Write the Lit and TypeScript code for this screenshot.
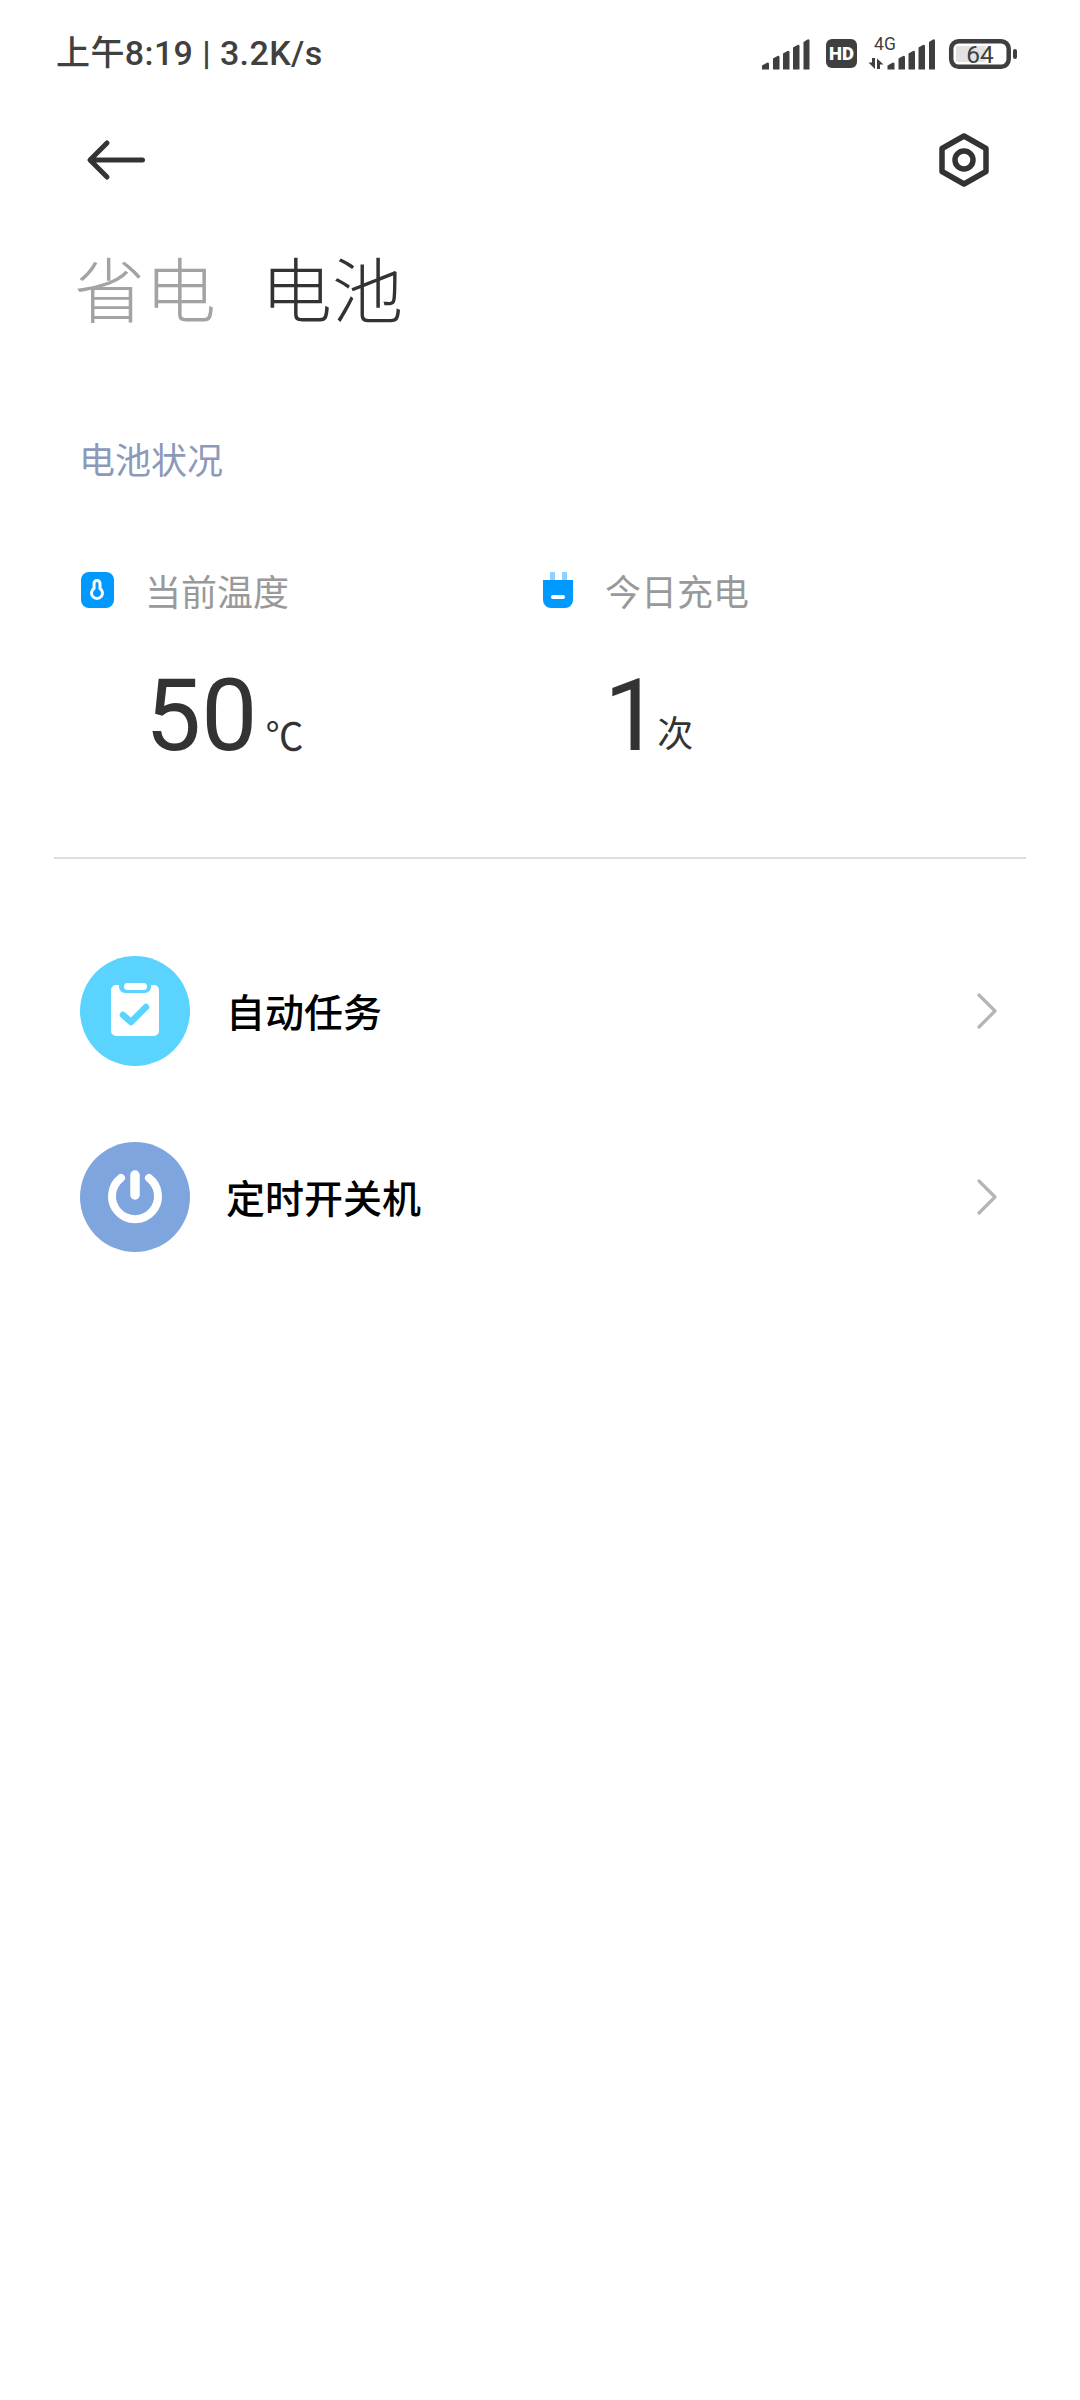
import { css, html, LitElement, svg } from "lit";
import { customElement } from "lit/decorators.js";

const signalBars = (dx: number) => svg`
  <g transform="translate(${dx} 0)" fill="#3f3f3f">
    <path d="M762 63.500l5-2.800q2-.8 2 1.300v5.500h-7z" />
    <path d="M773 56.500l4.500-2.500q2-.8 2 1.300v12.200h-6.500z" />
    <path d="M783 51.500l4.500-2.500q2-.8 2 1.300v17.200h-6.500z" />
    <path d="M793 45.500l4.500-2.500q2-.8 2 1.300v23.200h-6.500z" />
    <path d="M803.500 40l4-2.500q2-.8 2 1.300v28.700h-6z" />
  </g>
`;

@customElement("app-root")
export class AppRoot extends LitElement {
  static override styles = css`
    :host {
      display: block;
      width: 1080px;
      height: 2400px;
      background: #ffffff;
      font-family: "Noto Sans CJK SC", sans-serif;
      color: #333333;
      overflow: hidden;
    }

    .status {
      display: flex;
      justify-content: space-between;
      align-items: center;
      height: 104px;
      padding-left: 56px;
      padding-right: 60px;
      box-sizing: border-box;
    }

    .clock {
      font-family: Roboto, "Noto Sans CJK SC", sans-serif;
      font-size: 34px;
      font-weight: 500;
      line-height: 40px;
      color: #404040;
      letter-spacing: 0.4px;
      padding-top: 2px;
    }

    .status svg {
      display: block;
    }

    .nav {
      display: flex;
      justify-content: space-between;
      align-items: center;
      height: 112px;
      padding: 0 88px 0 80px;
    }

    .nav svg {
      display: block;
    }

    .tabs {
      display: flex;
      gap: 45px;
      padding-left: 74px;
      margin-top: 30px;
      font-size: 71px;
      line-height: 80px;
      font-weight: 300;
    }

    .tabs .off {
      color: #a3a3a3;
    }

    .section {
      padding-left: 79px;
      margin-top: 110px;
      font-size: 36px;
      line-height: 44px;
      color: #8d99b9;
    }

    .stats {
      display: flex;
      padding-left: 81px;
      margin-top: 88px;
    }

    .stat {
      width: 462px;
    }

    .stat-head {
      display: flex;
      align-items: center;
      height: 44px;
      font-size: 36px;
      color: #999999;
    }

    .stat-head svg {
      display: block;
      flex: none;
    }

    .stat-value {
      margin-top: 54px;
      height: 100px;
      font-family: Roboto, sans-serif;
      line-height: 100px;
      font-size: 100px;
      color: #333333;
    }

    .unit {
      font-family: "Noto Sans CJK SC", sans-serif;
      font-size: 36px;
      margin-left: 8px;
      line-height: 1;
    }

    .unit.deg {
      font-size: 38px;
    }

    .unit.tight {
      margin-left: -3px;
      vertical-align: 3px;
    }

    .rule {
      height: 2px;
      background: #dedede;
      margin: 91px 54px 0;
    }

    .list {
      display: flex;
      flex-direction: column;
      gap: 76px;
      margin-top: 97px;
      padding: 0 82px 0 80px;
    }

    .row {
      display: flex;
      align-items: center;
      height: 110px;
    }

    .disc {
      display: block;
      flex: none;
      width: 110px;
      height: 110px;
    }

    .label {
      flex: 1;
      margin-left: 36px;
      margin-bottom: 3px;
      font-size: 39px;
      font-weight: 500;
      color: #000000;
    }
  `;

  private _statusIcons() {
    return html`
      <svg width="270" height="40" viewBox="750 30 270 40">
        ${signalBars(0)}
        <rect x="826" y="37" width="31" height="29" rx="6" fill="#3f3f3f" />
        <text x="841.500" y="58" text-anchor="middle" font-family="Roboto" font-weight="900" font-size="18.500" fill="#fff">HD</text>
        <text x="885" y="47.500" text-anchor="middle" font-family="Roboto" font-size="17.500" fill="#3f3f3f">4G</text>
        <path d="M875 56v11l-6.500-6.500H872v-4.500zM877 56.500l6.500 6H880v4.500h-3z" fill="#3f3f3f" />
        ${signalBars(125.500)}
        <rect x="956" y="44" width="30" height="16" rx="2" fill="#e2e2e2" />
        <rect x="951.200" y="39.200" width="57.500" height="25.600" rx="7.500" fill="none" stroke="#3f3f3f" stroke-width="4.500" />
        <rect x="1013" y="47" width="4" height="10" rx="2" fill="#3f3f3f" />
        <text x="980" y="61" text-anchor="middle" font-family="Roboto" font-size="24.500" fill="#3f3f3f">64</text>
      </svg>
    `;
  }

  override render() {
    return html`
      <div class="status">
        <div class="clock">上午8:19 | 3.2K/s</div>
        ${this._statusIcons()}
      </div>
      <div class="nav">
        <svg width="66" height="44" viewBox="0 0 66 44">
          <path d="M62.500 22H10.500M27 5L10 22l17 17" fill="none" stroke="#333" stroke-width="5" stroke-linecap="round" stroke-linejoin="round" />
        </svg>
        <svg width="56" height="60" viewBox="0 0 56 60">
          <path d="M28 6l22 12.500v23L28 54 6 41.500v-23z" fill="none" stroke="#333" stroke-width="5.500" stroke-linejoin="round" />
          <circle cx="28" cy="30" r="9" fill="none" stroke="#333" stroke-width="5.500" />
        </svg>
      </div>
      <div class="tabs">
        <span class="off">省电</span>
        <span>电池</span>
      </div>
      <div class="section">电池状况</div>
      <div class="stats">
        <div class="stat">
          <div class="stat-head">
            <svg width="64" height="36" viewBox="0 0 64 36">
              <rect width="33" height="36" rx="8" fill="#0099ff" />
              <path d="M13 16.400V11.500a3 3 0 0 1 6 0v4.900a5.500 5.500 0 1 1-6 0z" fill="none" stroke="#fff" stroke-width="3" />
            </svg>
            当前温度
          </div>
          <div class="stat-value" style="padding-left:64px">50<span class="unit deg">℃</span></div>
        </div>
        <div class="stat">
          <div class="stat-head">
            <svg width="62" height="36" viewBox="0 0 62 36">
              <path d="M7 0h5v9H7zM19 0h5v9h-5z" fill="#8fd2ff" />
              <path d="M0 8h30v20a8 8 0 0 1-8 8H8a8 8 0 0 1-8-8z" fill="#0099ff" />
              <rect x="8" y="23" width="14" height="4" rx="2" fill="#fff" />
            </svg>
            今日充电
          </div>
          <div class="stat-value" style="padding-left:61px">1<span class="unit tight">次</span></div>
        </div>
      </div>
      <div class="rule"></div>
      <div class="list">
        <div class="row">
          <svg class="disc" viewBox="0 0 110 110">
            <circle cx="55" cy="55" r="55" fill="#5ad4ff" />
            <path d="M36 29h3v2a6 6 0 0 0 6 6h20a6 6 0 0 0 6-6v-2h3a5 5 0 0 1 5 5v41a5 5 0 0 1-5 5H36a5 5 0 0 1-5-5V34a5 5 0 0 1 5-5z" fill="#fff" />
            <rect x="44" y="27" width="23" height="7" rx="3.500" fill="#fff" />
            <path d="M43 59l8 7 15-15" fill="none" stroke="#5ad4ff" stroke-width="6.500" stroke-linecap="round" stroke-linejoin="round" />
          </svg>
          <div class="label">自动任务</div>
          ${this._chevron()}
        </div>
        <div class="row">
          <svg class="disc" viewBox="0 0 110 110">
            <circle cx="55" cy="55" r="55" fill="#7fa5de" />
            <path d="M41 36A23 23 0 1 0 69 36" fill="none" stroke="#fff" stroke-width="8" stroke-linecap="round" />
            <path d="M55 33v20" fill="none" stroke="#fff" stroke-width="9.500" stroke-linecap="round" />
          </svg>
          <div class="label">定时开关机</div>
          ${this._chevron()}
        </div>
      </div>
    `;
  }

  private _chevron() {
    return html`
      <svg class="chevron" width="24" height="40" viewBox="0 0 24 40">
        <path d="M5 4l16 16L5 36" fill="none" stroke="#b5b5b5" stroke-width="3.200" stroke-linecap="round" stroke-linejoin="round" />
      </svg>
    `;
  }
}

declare global {
  interface HTMLElementTagNameMap {
    "app-root": AppRoot;
  }
}
